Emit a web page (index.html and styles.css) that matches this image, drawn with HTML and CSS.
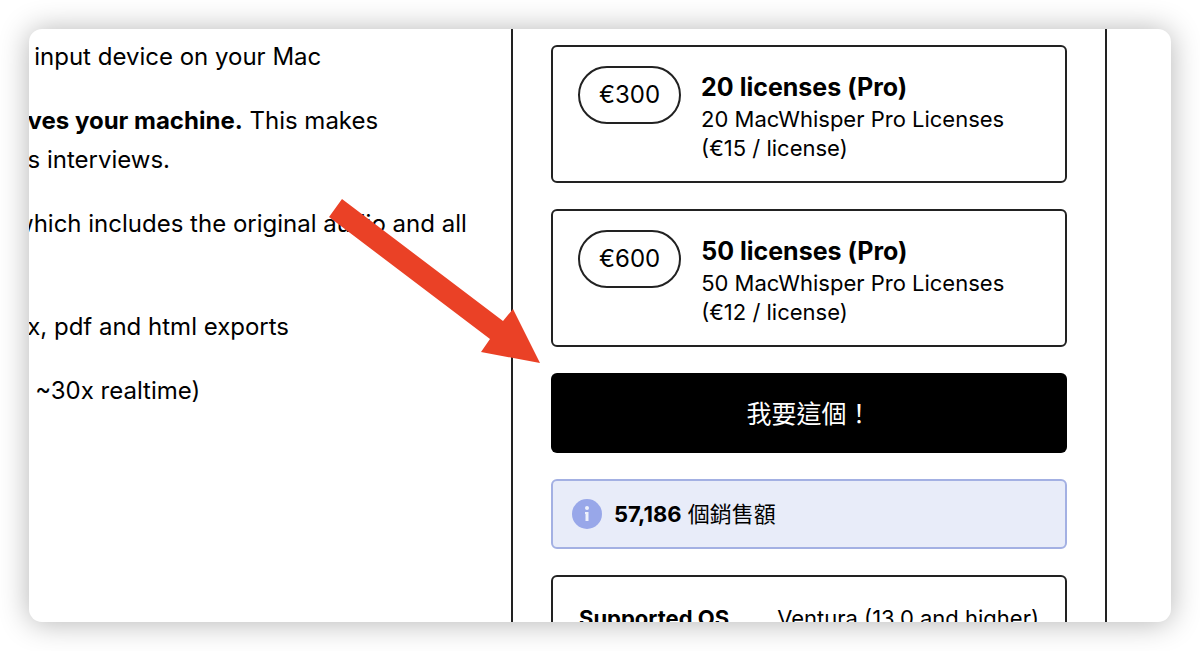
FILE: index.html
```
<!DOCTYPE html>
<html lang="zh-Hant">
<head>
    <meta charset="UTF-8">
    <meta name="viewport" content="width=device-width, initial-scale=1.0">
    <title>MacWhisper</title>
    <link rel="stylesheet" href="styles.css">
</head>
<body>
    <main class="window">
        <article class="description" lang="en">
            <p>y input device on your Mac</p>
            <p><strong>aves your machine.</strong> This makes<br>as interviews.</p>
            <p>which includes the original audio and all<br>&nbsp;</p>
            <p>cx, pdf and html exports</p>
            <p>o ~30x realtime)</p>
        </article>

        <section class="checkout">
            <button type="button" class="option">
                <span class="price">€300</span>
                <span class="option-text">
                    <strong class="option-title">20 licenses (Pro)</strong>
                    <span>20 MacWhisper Pro Licenses<br>(€15 / license)</span>
                </span>
            </button>

            <button type="button" class="option">
                <span class="price">€600</span>
                <span class="option-text">
                    <strong class="option-title">50 licenses (Pro)</strong>
                    <span>50 MacWhisper Pro Licenses<br>(€12 / license)</span>
                </span>
            </button>

            <button type="button" class="buy-btn">我要這個！</button>

            <div class="sales">
                <svg class="info-icon" viewBox="0 0 30 30" aria-hidden="true">
                    <circle cx="15" cy="15" r="15" fill="#98a7e9"/>
                    <circle cx="15" cy="9" r="2" fill="#eef1fc"/>
                    <path d="M13 13h3.5v9h-3v-7H13z" fill="#eef1fc"/>
                </svg>
                <span><strong>57,186</strong> 個銷售額</span>
            </div>

            <table class="specs">
                <tr>
                    <th scope="row">Supported OS</th>
                    <td>Ventura (13.0 and higher)</td>
                </tr>
            </table>
        </section>

        <svg class="arrow" viewBox="0 0 211 164" aria-hidden="true">
            <path d="M13 0L174 122L184 110L211 164L152 153L161 140L0 18Z" fill="#ea4126"/>
        </svg>
    </main>
</body>
</html>
```

FILE: styles.css
```
* {
    box-sizing: border-box;
}

body {
    display: flex;
    height: 100vh;
    margin: 0;
    padding: 29px;
    background-color: #fff;
    color: #000;
    font-family: Inter, "Noto Sans CJK TC", sans-serif;
    font-size: 22px;
    overflow: hidden;
}

.window {
    position: relative;
    flex: 1;
    display: grid;
    grid-template-columns: minmax(0, 1fr) 596px 64px;
    background-color: #fff;
    border-radius: 13px;
    box-shadow: 0 1px 30px rgba(0, 0, 0, 0.3);
    overflow: hidden;
}

/* left column is scrolled sideways under the window edge */
.description {
    margin-left: -15px;
    padding-top: 8px;
    font-size: 24px;
    line-height: 39px;
    white-space: nowrap;
}

.description p {
    margin: 0 0 25px;
}

.checkout {
    display: flex;
    flex-direction: column;
    gap: 26px;
    padding: 16px 38px;
    border: solid #222;
    border-width: 0 2px;
}

button {
    font: inherit;
    color: inherit;
    cursor: pointer;
}

.option {
    display: flex;
    flex-shrink: 0;
    align-items: flex-start;
    gap: 20px;
    height: 138px;
    padding: 19px 25px;
    background-color: #fff;
    border: 2px solid #222;
    border-radius: 6px;
    text-align: left;
}

.price {
    padding: 13px 19px;
    border: 2px solid #222;
    border-radius: 29px;
    font-size: 24px;
    line-height: 28px;
}

.option-text {
    padding-top: 4px;
    line-height: 29px;
}

.option-title {
    display: block;
    font-size: 25px;
    line-height: 35px;
}

.buy-btn {
    flex-shrink: 0;
    height: 80px;
    padding-bottom: 4px;
    background-color: #000;
    border: none;
    border-radius: 6px;
    color: #fff;
    font-size: 25px;
}

.sales {
    display: flex;
    flex-shrink: 0;
    align-items: center;
    gap: 12px;
    height: 70px;
    padding: 0 19px;
    background-color: #e8ecf9;
    border: 2px solid #a3b0e3;
    border-radius: 6px;
    line-height: 30px;
}

.info-icon {
    width: 30px;
    height: 30px;
}

.specs {
    padding: 24px 26px;
    border: 2px solid #222;
    border-radius: 6px;
    border-spacing: 0;
    line-height: 34px;
    white-space: nowrap;
}

.specs th,
.specs td {
    padding: 0;
    text-align: left;
}

.specs td {
    text-align: right;
}

.arrow {
    position: absolute;
    top: 170px;
    left: 300px;
    width: 211px;
    height: 164px;
}
```
